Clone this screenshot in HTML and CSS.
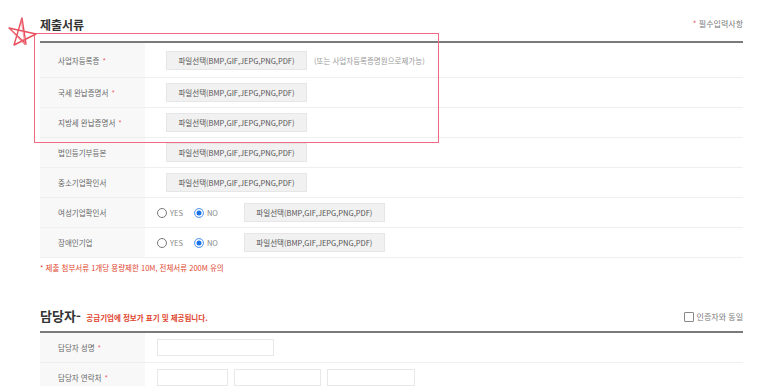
FILE: index.html
```html
<!DOCTYPE html>
<html lang="ko">
<head>
  <meta charset="UTF-8">
  <meta name="viewport" content="width=device-width, initial-scale=1.0">
  <title>제출서류</title>
  <link rel="stylesheet" href="styles.css">
</head>
<body>
  <div class="page">
    <div class="sec-head first">
      <h2>제출서류</h2>
      <span class="req"><i>*</i> 필수입력사항</span>
    </div>
    <div class="table">
      <div class="row tall">
        <div class="th">사업자등록증<i>*</i></div>
        <div class="td"><button class="file">파일선택(BMP,GIF,JEPG,PNG,PDF)</button><span class="hint">(또는 사업자등록증명원으로제가능)</span></div>
      </div>
      <div class="row">
        <div class="th">국세 완납증명서<i>*</i></div>
        <div class="td"><button class="file">파일선택(BMP,GIF,JEPG,PNG,PDF)</button></div>
      </div>
      <div class="row">
        <div class="th">지방세 완납증명서<i>*</i></div>
        <div class="td"><button class="file">파일선택(BMP,GIF,JEPG,PNG,PDF)</button></div>
      </div>
      <div class="row">
        <div class="th">법인등기부등본</div>
        <div class="td"><button class="file">파일선택(BMP,GIF,JEPG,PNG,PDF)</button></div>
      </div>
      <div class="row">
        <div class="th">중소기업확인서</div>
        <div class="td"><button class="file">파일선택(BMP,GIF,JEPG,PNG,PDF)</button></div>
      </div>
      <div class="row">
        <div class="th">여성기업확인서</div>
        <div class="td radios">
          <label><span class="radio"></span>YES</label>
          <label><span class="radio on"></span>NO</label>
          <button class="file">파일선택(BMP,GIF,JEPG,PNG,PDF)</button>
        </div>
      </div>
      <div class="row">
        <div class="th">장애인기업</div>
        <div class="td radios">
          <label><span class="radio"></span>YES</label>
          <label><span class="radio on"></span>NO</label>
          <button class="file">파일선택(BMP,GIF,JEPG,PNG,PDF)</button>
        </div>
      </div>
    </div>
    <p class="note">* 제출 첨부서류 1개당 용량제한 10M, 전체서류 200M 유의</p>

    <div class="sec-head second">
      <h2>담당자- <em>공급기업에 정보가 표기 및 제공됩니다.</em></h2>
      <span class="same"><span class="check"></span>인증자와 동일</span>
    </div>
    <div class="table">
      <div class="row">
        <div class="th">담당자 성명<i>*</i></div>
        <div class="td"><span class="input w1"></span></div>
      </div>
      <div class="row">
        <div class="th">담당자 연락처<i>*</i></div>
        <div class="td"><span class="input w2"></span><span class="input w3"></span><span class="input w4"></span></div>
      </div>
    </div>
  </div>

  <div class="mark"></div>
  <svg class="star" width="40" height="40" viewBox="0 0 40 40">
    <path d="M17 2 L21 28 L4 12 L31 18 L9 29 Z" fill="none" stroke="#e8505e" stroke-width="1.4" stroke-linejoin="round"/>
    <path d="M16 3 L20 29 L5 13" fill="none" stroke="#ee7884" stroke-width="0.8"/>
  </svg>
</body>
</html>
```

FILE: styles.css
```css
body {
  margin: 0;
  background: #fff;
  font-family: "Noto Sans CJK KR", "Noto Sans", sans-serif;
  color: #666;
  font-size: 7.5px;
}
.page {
  width: 703px;
  padding-left: 40px;
}
.sec-head {
  display: flex;
  align-items: flex-end;
  justify-content: space-between;
  border-bottom: 2px solid #7a7a7a;
  box-sizing: border-box;
}
.sec-head.first {
  height: 43px;
  padding-bottom: 8px;
}
.sec-head.second {
  height: 60px;
  padding-bottom: 5px;
}
h2 {
  margin: 0;
  font-size: 12px;
  font-weight: bold;
  color: #333;
  line-height: 16px;
}
.second h2 {
  font-size: 13px;
}
h2 em {
  font-style: normal;
  font-size: 7.5px;
  color: #e0452e;
  margin-left: 2px;
}
.req {
  font-size: 8px;
  color: #777;
  padding-bottom: 4px;
}
i {
  font-style: normal;
  color: #ec5a6a;
}
.th i {
  margin-left: 3px;
}
.same {
  display: flex;
  align-items: center;
  font-size: 8px;
  color: #777;
  padding-bottom: 4px;
}
.check {
  width: 8px;
  height: 8px;
  border: 1px solid #888;
  border-radius: 1px;
  margin-right: 3px;
}
.row {
  display: flex;
  height: 30px;
  border-bottom: 1px solid #efefef;
  box-sizing: border-box;
}
.row.tall {
  height: 35px;
}
.th {
  width: 105px;
  background: #f8f8f8;
  padding-left: 18px;
  box-sizing: border-box;
  display: flex;
  align-items: center;
  color: #666;
}
.td {
  flex: 1;
  display: flex;
  align-items: center;
  padding-left: 21px;
}
.file {
  height: 19px;
  width: 141px;
  padding: 0;
  background: #f1f1f1;
  border: 1px solid #e6e6e6;
  font-family: inherit;
  font-size: 7.5px;
  color: #555;
}
.hint {
  margin-left: 7px;
  color: #999;
}
.radios {
  padding-left: 12px;
}
.radios label {
  display: flex;
  align-items: center;
  color: #888;
  margin-right: 11px;
}
.radios label + label {
  margin-right: 26px;
}
.radio {
  width: 8px;
  height: 8px;
  border: 1px solid #777;
  border-radius: 50%;
  margin-right: 3px;
  box-sizing: content-box;
}
.radio.on {
  background: #1a73e8;
  border-color: #6aa4f0;
  box-shadow: inset 0 0 0 1.5px #fff;
}
.note {
  margin: 5px 0 0;
  color: #e0452e;
  line-height: 10px;
}
.input {
  height: 17px;
  border: 1px solid #e8e8e8;
  box-sizing: border-box;
  margin-right: 6px;
}
.td .input:first-child {
  margin-left: -9px;
}
.w1 { width: 117px; }
.w2 { width: 71px; }
.w3 { width: 87px; }
.w4 { width: 88px; }
.mark {
  position: absolute;
  left: 34px;
  top: 33px;
  width: 403px;
  height: 108px;
  border: 1.5px solid #f06a80;
}
.star {
  position: absolute;
  left: 5px;
  top: 16px;
}
```
